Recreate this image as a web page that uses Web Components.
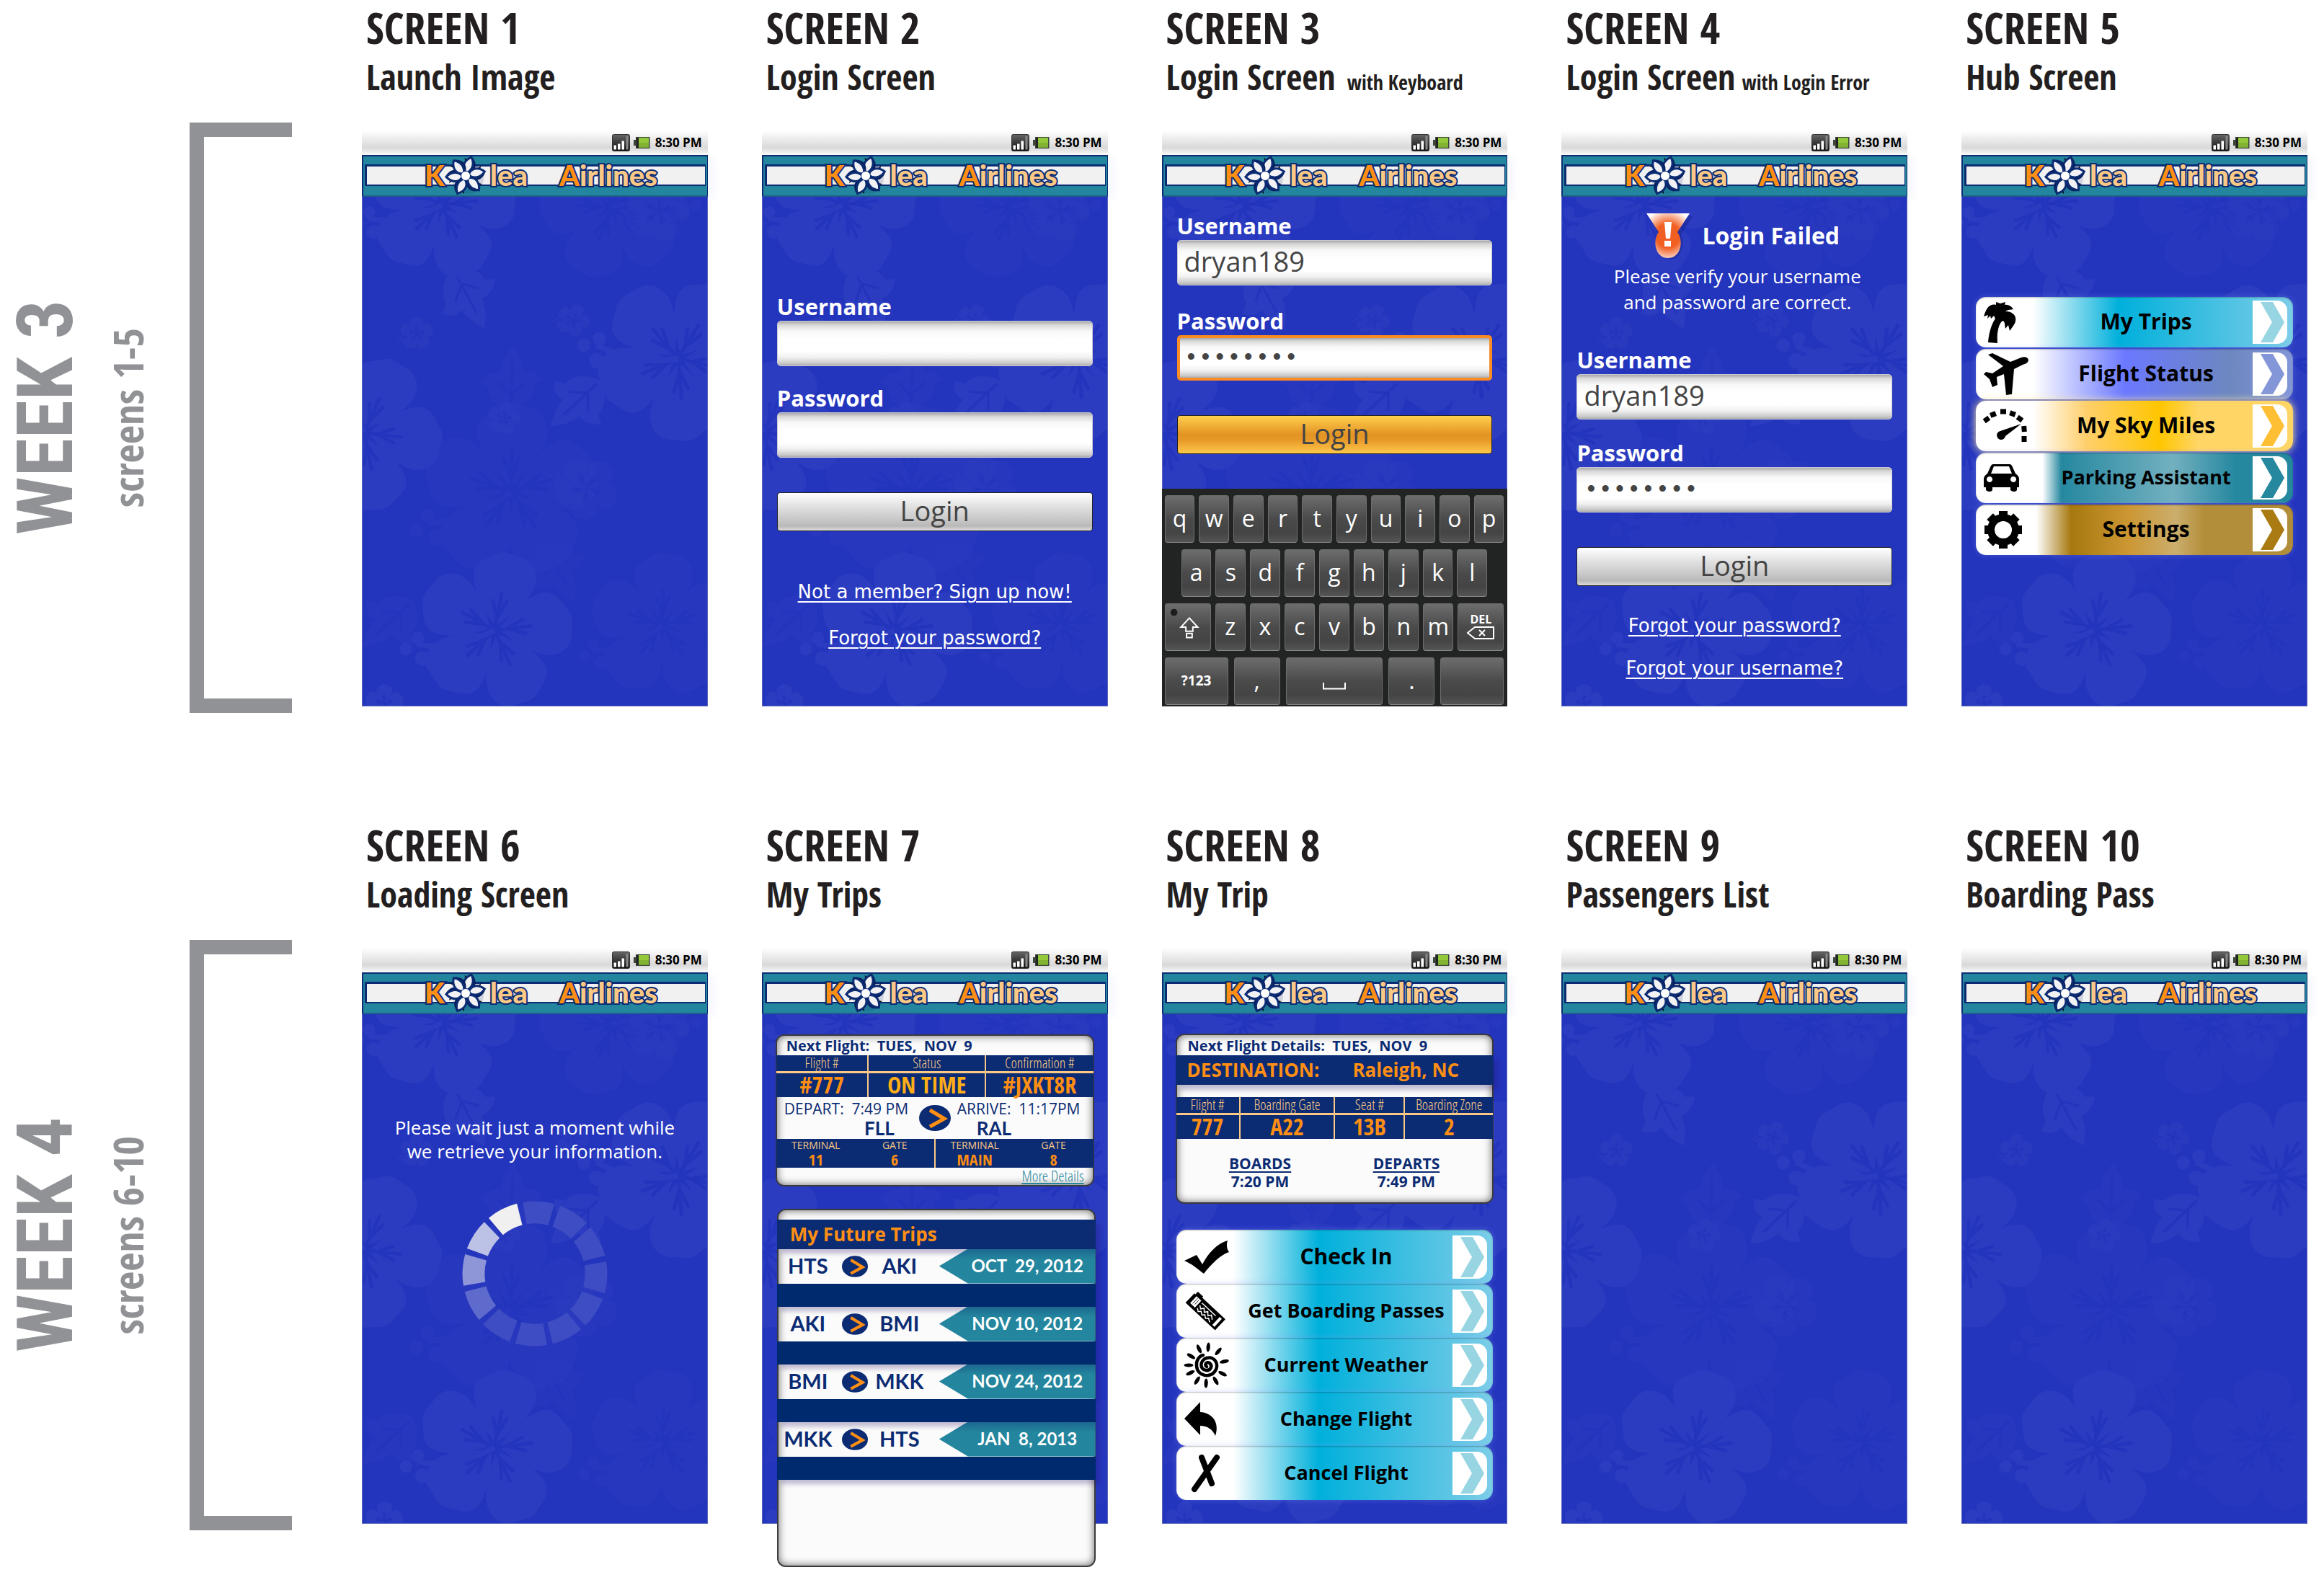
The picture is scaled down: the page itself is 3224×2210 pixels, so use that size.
<!DOCTYPE html>
<html lang="en">
<head>
<meta charset="utf-8">
<title>Kolea Airlines – app storyboard</title>
<style>
html{--cond:"Open Sans Condensed","Roboto Condensed","Liberation Sans Narrow","Liberation Sans",sans-serif;
--light:"Open Sans Condensed Light","Open Sans Condensed","Roboto Condensed","Liberation Sans Narrow",sans-serif;
--narrow:"Liberation Sans Narrow","Roboto Condensed","Open Sans Condensed",sans-serif;
--sans:"Open Sans","Noto Sans",sans-serif;--navy:#0b2b73;--teal:#24869e;--orange:#ff8f14;--peach:#fbc985}
body{margin:0;background:#fff;font-family:var(--sans);color:#231f20}
</style>
</head>
<body>
<story-week name="WEEK 3" range="screens 1-5">
  <app-screen name="SCREEN 1" about="Launch Image"></app-screen>
  <app-screen name="SCREEN 2" about="Login Screen">
    <login-form top="132" gap="24"><a href="#join">Not a member? Sign up now!</a><a href="#password">Forgot your password?</a></login-form>
  </app-screen>
  <app-screen name="SCREEN 3" about="Login Screen" note="with Keyboard" wide>
    <login-form top="20" gap="29" user="dryan189" secret="password" active></login-form>
    <soft-keyboard></soft-keyboard>
  </app-screen>
  <app-screen name="SCREEN 4" about="Login Screen" note="with Login Error">
    <login-alert></login-alert>
    <login-form top="42" gap="26" user="dryan189" secret="password" tight><a href="#password">Forgot your password?</a><a href="#username">Forgot your username?</a></login-form>
  </app-screen>
  <app-screen name="SCREEN 5" about="Hub Screen">
    <menu-list class="hub">
      <menu-row tone="sky" icon="palm">My Trips</menu-row>
      <menu-row tone="iris" icon="plane">Flight Status</menu-row>
      <menu-row tone="sun" icon="gauge">My Sky Miles</menu-row>
      <menu-row tone="sea" icon="car" long>Parking Assistant</menu-row>
      <menu-row tone="sand" icon="gear">Settings</menu-row>
    </menu-list>
  </app-screen>
</story-week>
<story-week name="WEEK 4" range="screens 6-10">
  <app-screen name="SCREEN 6" about="Loading Screen"><loading-note></loading-note></app-screen>
  <app-screen name="SCREEN 7" about="My Trips"><next-flight></next-flight><future-trips></future-trips></app-screen>
  <app-screen name="SCREEN 8" about="My Trip">
    <flight-details></flight-details>
    <menu-list class="trip">
      <menu-row tone="sky" icon="check" tall>Check In</menu-row>
      <menu-row tone="sky" icon="pass" tall long>Get Boarding Passes</menu-row>
      <menu-row tone="sky" icon="weather" tall long>Current Weather</menu-row>
      <menu-row tone="sky" icon="back" tall long>Change Flight</menu-row>
      <menu-row tone="sky" icon="cross" tall long>Cancel Flight</menu-row>
    </menu-list>
  </app-screen>
  <app-screen name="SCREEN 9" about="Passengers List"></app-screen>
  <app-screen name="SCREEN 10" about="Boarding Pass"></app-screen>
</story-week>

<script>
const part = (tag, css, html) => customElements.define(tag, class extends HTMLElement {
  connectedCallback() {
    if (this.shadowRoot) return;
    this.attachShadow({mode: 'open'}).innerHTML =
      `<style>:host{display:block}*{box-sizing:border-box}${css}</style>${html(this)}`;
  }
});
const attr = (el, n) => el.getAttribute(n) || '';

/* A week: turned label, bracket, five screens */
part('story-week', `
:host{display:grid;grid-template-columns:263px 142px minmax(0,1fr);padding:0 23px 0 0;height:1134px}
.label{margin-top:170px;height:819px;display:flex;align-items:center;justify-content:flex-start;gap:18px;color:#919296;font-family:var(--cond)}
.label>*{writing-mode:vertical-rl;transform:rotate(180deg);margin:0;text-align:center;white-space:nowrap;font-weight:700}
h1{font-family:var(--narrow);font-size:108px;line-height:126px}
p{font-size:57px;line-height:66px}
.bracket{margin-top:170px;height:819px;border:20px solid #919296;border-right:0}
.screens{margin-left:97px;display:grid;grid-template-columns:repeat(5,minmax(0,1fr));column-gap:75px;align-items:start}
`, e => `<div class="label"><h1>${attr(e,'name')}</h1><p>${attr(e,'range')}</p></div><div class="bracket"></div><div class="screens"><slot></slot></div>`);

/* One captioned phone screen */
part('app-screen', `
header{height:181px;padding:0 0 0 6px;font-family:var(--cond);font-weight:700;white-space:nowrap}
h2{margin:0;font-size:60px;line-height:76px;font-weight:700}
p{margin:0;font-size:48px;line-height:62px;font-weight:700}
small{font-size:28px;margin-left:9px}
:host([wide]) small{margin-left:16px}
.body{position:relative;z-index:0;height:707px;background:#2334bd;border:1px solid #5a67b8;border-top:0;display:flex;flex-direction:column}
flower-field{position:absolute;inset:0;z-index:-1}
`, e => `<header><h2>${attr(e,'name')}</h2><p>${attr(e,'about')}${attr(e,'note') ? `<small>${attr(e,'note')}</small>` : ''}</p></header>
<status-bar></status-bar><brand-bar></brand-bar><div class="body"><flower-field></flower-field><slot></slot></div>`);

part('status-bar', `
:host{display:flex;align-items:center;justify-content:flex-end;gap:5px;height:34px;padding-right:8px;background:linear-gradient(#fff,#ececec 35%,#d9d9d9 70%,#f4f4f4 95%,#fff)}
span{font:700 17px/34px var(--sans);color:#000;margin-left:2px;white-space:nowrap}
svg{display:block}
`, () => `<svg width="25" height="24" viewBox="0 0 25 24"><defs><linearGradient id="g" x2="0" y2="1"><stop stop-color="#666"/><stop offset="1" stop-color="#0c0c0c"/></linearGradient></defs><rect x=".5" y=".5" width="24" height="23" rx="2" fill="url(#g)" stroke="#333"/><path d="M2.500 15.500h3.500v6h-3.500zM8 13.500h3.500v8H8zM13.500 9.500H17v12h-3.500z" fill="#fff"/><path d="M19.500 3h3v18.500h-3z" fill="#888"/></svg>
<svg width="23" height="18" viewBox="0 0 23 18"><path d="M0 5h3V1h19.500v16H3v-4H0z" fill="#3c443c"/><path d="M4 2h3v14H4z" fill="#222"/><path d="M7 2h14v13.500H7z" fill="#92c83a"/><path d="M7 9h14v6.500H7z" fill="#83b332"/></svg><span>8:30 PM</span>`);

/* Airline banner */
part('brand-bar', `
:host{height:58px;background:var(--teal);border:2px solid var(--navy);border-right-width:1px;border-bottom-color:#1d5f88;padding:11px 2px 0;box-sizing:border-box;box-shadow:10px 4px 8px #eef0fb66}
.bar{display:flex;align-items:center;height:30px;padding-left:80px;background:#f1f1f2;border:3px solid var(--navy);border-width:3px 1px 2px 3px}
.bar>*{flex:none}
span{font:900 40px/28px Lato,var(--sans);padding-bottom:2px;color:var(--peach);-webkit-text-stroke:4px var(--navy);paint-order:stroke fill;white-space:nowrap}
b{color:var(--orange);font-weight:inherit}
svg{width:60px;height:60px;margin:0 4px 0 -1px;overflow:visible}
.air{margin-left:44px}
`, () => `<div class="bar"><span><b>K</b></span><svg viewBox="-30 -30 60 60"><defs><g id="p"><path d="M0-4C-11-11-10-21 1-28 11-20 9-10 0-4z" transform="translate(2 1)" fill="#071f5c"/><path d="M-8-24l6 3-3 3z" fill="#000"/><path d="M0-4C-9-10-8-20 1-27 8-19 7-10 0-4z" fill="#f2f2f4" stroke="#0b2b73" stroke-width="3"/></g></defs>
<circle cx="3" cy="3" r="22" fill="#0b2b73" opacity=".15"/>${[15,75,135,203,265,320].map(a => `<use href="#p" transform="rotate(${a})"/>`).join('')}<circle r="6.500" fill="#fff" stroke="#0b2b73"/></svg><span>lea</span><span class="air"><b>A</b>irlines</span></div>`);

/* Tone-on-tone hibiscus wallpaper */
part('flower-field', `svg{display:block;width:100%;height:100%}`, () => {
  const big = [[110,12,106,10,1],[346,15,104,200,.5],[438,225,118,30,1],[2,328,112,95,1],[206,410,126,0,.5],[311,404,46,40,.5],[183,602,112,10,1],[416,595,104,0,.5],[75,190,24,0,.8],[292,172,24,20,.8],[196,308,24,10,.8],[30,704,28,0,1],[410,20,46,10,.5]];
  const leaf = [[125,100,150,1],[330,255,225,1],[206,300,0,.5],[70,560,225,.5],[250,480,150,.4]];
  return `<svg viewBox="0 0 478 707" preserveAspectRatio="xMidYMid slice"><defs>
<g id="f">${[0,72,144,216,288].map(a => `<g transform="rotate(${a})"><path d="M0-6C-10-14-36-42-38-66C-38-82-24-86-13-94C-3-101 8-95 18-94C34-92 42-78 40-62C36-40 12-16 0-6z" fill="#2b3cc0"/><path d="M0-8L1-46M0-16L-8-36M1-18L9-38" stroke="#2334bd" stroke-width="4" stroke-linecap="round" fill="none"/></g>`).join('')}<path d="M0 0C-28 22-60 34-92 34" stroke="#2b3cc0" stroke-width="7" fill="none"/><circle cx="-92" cy="26" r="8" fill="#2b3cc0"/><circle cx="-104" cy="42" r="8" fill="#2b3cc0"/><circle cx="-82" cy="50" r="9" fill="#2b3cc0"/></g>
<g id="l"><path d="M0 0C-18-6-32-20-32-36L-44-42C-36-54-22-58-14-56C-14-70-6-84 4-94C10-82 18-70 18-56C28-60 38-56 44-46L32-38C32-20 18-6 0 0z" fill="#2b3cc0"/><path d="M0-6L2-70M0-24L-18-42M1-26L20-42" stroke="#2334bd" stroke-width="3" fill="none"/></g></defs>
${leaf.map(([x,y,r,o]) => `<use href="#l" opacity="${o}" transform="translate(${x} ${y}) rotate(${r})"/>`).join('')}
${big.map(([x,y,r,a,o]) => `<use href="#f" opacity="${o}" transform="translate(${x} ${y}) rotate(${a}) scale(${r/100})"/>`).join('')}</svg>`;
});

part('login-form', `
form{display:flex;flex-direction:column;padding:0 20px}
label{font:700 31px/40px var(--sans);color:#fff}
input{height:63px;border:1px solid #c9c9d4;border-radius:5px;padding:0 9px 5px;margin:0;min-width:0;font:38px/56px var(--sans);color:#444;outline:0;
background:linear-gradient(#a8a8a8,#d9d9d9 8%,#f8f8f8 22%,#fff 40%,#fff 68%,#f0f0f0 82%,#c9c9c9 95%,#ababab)}
input[type=password]{font:33px/60px "Liberation Mono",monospace;padding:2px 9px 0}
:host([active]) input[type=password]{border:4px solid #fb8b24;padding:2px 6px 0}
button{height:54px;margin:48px 0 0;padding:0 0 4px;border:1px solid #222;border-radius:4px;font:38px/46px var(--sans);color:#444;background:linear-gradient(#fff,#e2e2e2 35%,#c4c4c4 75%,#b8b8b8 88%,#ddd)}
:host([active]) button{background:linear-gradient(#ffcf4f,#e39323 50%,#e79a29 65%,#ffc94b)}
nav{display:flex;flex-direction:column;align-items:center;gap:32px;margin-top:68px}
:host([tight]) nav{margin-top:39px;gap:27px}
::slotted(a){font:26px/32px "DejaVu Sans",var(--sans);color:#fff;text-underline-offset:4px;text-decoration-thickness:2px;white-space:nowrap}
`, e => `<form style="margin-top:${attr(e,'top')}px"><label for="u">Username</label><input id="u" type="text" value="${attr(e,'user')}">
<label for="p" style="margin-top:${attr(e,'gap')}px">Password</label><input id="p" type="password" value="${attr(e,'secret')}">
<button type="button">Login</button>${e.children.length ? '<nav><slot></slot></nav>' : ''}</form>`);

part('login-alert', `
.head{display:flex;align-items:center;justify-content:center;gap:17px;margin:22px 0 0 24px;height:64px}
h3{margin:0;font:700 32px/40px var(--sans);color:#fff}
p{margin:6px 0 0;padding-left:8px;font:26px/36px var(--sans);color:#fff;text-align:center}
svg{overflow:visible}
`, () => `<div class="head"><svg width="60" height="62" viewBox="0 0 60 62"><defs><radialGradient id="m" cx=".5" cy=".5" r=".6"><stop offset=".45" stop-color="#f15f22"/><stop offset="1" stop-color="#fff"/></radialGradient></defs><path d="M4 4H64L48 30C52 36 52 62 33 64" fill="#0d1a7a" opacity=".35"/><path d="M0 0H60L43 26C52 38 48 62 30 62S8 38 17 26z" fill="url(#m)"/><path d="M25 12h10l-2 23h-6zM25 38h9v8h-9z" fill="#fff"/></svg><h3>Login Failed</h3></div><p>Please verify your username<br>and password are correct.</p>`);

part('soft-keyboard', `
:host{margin:auto -1px -1px}
.board{background:#222423;padding:9px 5px 2px 4px;display:flex;flex-direction:column;gap:9px}
.row{display:flex;gap:6px}
.row:nth-child(2){padding:0 23px}
button{flex:1 1 0;min-width:0;height:66px;padding:0 0 2px;border:1px solid #6e6e6e;border-bottom-color:#888;border-radius:4px;background:linear-gradient(#6d6d6d,#4a4a4a 50%,#444 80%,#555);color:#fff;font:32px/58px var(--sans);display:flex;flex-direction:column;align-items:center;justify-content:center}
.w2{flex:0 0 64px}.w3{flex:0 0 88px}.w2.c{margin:0 2px}
.s{font:700 19px/24px var(--sans)}.d{font:700 16px/18px var(--sans)}
.low{align-items:center;padding-top:16px}
`, () => {
  const keys = s => [...s].map(k => `<button type="button">${k}</button>`).join('');
  return `<div class="board"><div class="row">${keys('qwertyuiop')}</div><div class="row">${keys('asdfghjkl')}</div>
<div class="row"><button type="button" class="w2" aria-label="Shift"><svg width="62" height="64" viewBox="0 0 62 64"><circle cx="11" cy="12" r="5" fill="#1c1c1c"/><path d="M33 20L45 33H38V39H28V33H21zM29 42h8v6h-8z" fill="none" stroke="#fff" stroke-width="2"/></svg></button>${keys('zxcvbnm')}
<button type="button" class="w2 d">DEL<svg width="38" height="20" viewBox="0 0 38 20"><path d="M1 10L11 2H37V18H11zM17 6l8 8M25 6l-8 8" fill="none" stroke="#fff" stroke-width="2"/></svg></button></div>
<div class="row"><button type="button" class="w3 s">?123</button><button type="button" class="w2 c">,</button><button type="button" class="low" aria-label="Space"><svg width="32" height="10" viewBox="0 0 32 10"><path d="M1 0V8.500H31V0" fill="none" stroke="#fff" stroke-width="2"/></svg></button><button type="button" class="w2 c">.</button><button type="button" class="w3" aria-label="Enter"></button></div></div>`;
});

part('menu-list', `
nav{display:flex;flex-direction:column;margin:0 19px}
:host(.hub) nav{margin-top:139px;gap:2px}
:host(.trip) nav{margin-top:36px}
`, () => `<nav><slot></slot></nav>`);

const icons = {
  palm: [45,58,`<path d="M6 57L19 58C18 45 20 33 25 28C29 25 29 32 30 38L34 33 36 41 41 34C46 27 45 20 40 17C37 14 33 14 30 14 34 11 38 12 41 11 38 6 33 4 29 5L30 1 23 3 17 1 17 5C10 3 4 7 0 21L6 19 5 24 9 20 10 24 14 20 16 24C10 33 7 45 6 57z"/>`],
  plane: [62,58,`<path d="M6 2L12 0 37 12 52 6C57 4 62 6 62 10C61 14 57 15 54 16L42 22 39 57 31 58 28 29 18 33 19 44 12 47 8 36 0 29 3 26 12 28 27 18z"/>`],
  gauge: [62,48,`<g>${[[4,15,-35],[13,8,-20],[27,4,0],[40,7,20],[50,14,35],[56,28,85],[56,42,90]].map(([x,y,r]) => `<rect x="-4" y="-3.500" width="8" height="7" transform="translate(${x} ${y}) rotate(${r})"/>`).join('')}<path d="M23 31L52 21 30 38A6 6 0 1 1 23 31z"/></g>`],
  car: [50,40,`<path fill-rule="evenodd" d="M10 3Q11 1 13 1H36Q38 1 39 3L44 14Q49 17 49 22V33H46V37Q45 39 42 39T37 37V33H12V37Q11 39 8 39T3 37V33H0V22Q0 17 5 14zM14 4L10 14H39L35 4zM8 18a4 4 0 1 0 .1 0zM41 18a4 4 0 1 0 .1 0z"/>`],
  gear: [54,52,`<circle cx="27" cy="26" r="17" fill="none" stroke="#000" stroke-width="10"/>${[0,45,90,135].map(a => `<rect x="21" y="0" width="12" height="7" transform="rotate(${a} 27 26)"/><rect x="21" y="45" width="12" height="7" transform="rotate(${a} 27 26)"/>`).join('')}`],
  check: [62,46,`<path d="M0 28L17 20 25 33C33 18 45 4 60 0C58 6 59 12 62 16C50 20 38 32 27 46C19 40 10 32 0 28z"/>`],
  pass: [58,54,`<g transform="translate(16 0) rotate(43)"><path d="M2-2H12V0H56V21H0V3H2z"/><path d="M5 4h9v13H5z" fill="#fff"/><path d="M8 5v10M11 6v8" stroke="#000" stroke-width=".8"/><path d="M17 5h26v1.500H17z" fill="#fff"/><path d="M17 10l4 3 3-4 4 4 3-4 4 4 3-4 5 4M17 15l4 3 3-3 4 3 3-3 4 3 3-3 5 3" fill="none" stroke="#fff" stroke-width="1.500"/><path d="M48 3h4v15h-4z" fill="#fff"/></g>`],
  weather: [62,62,`<path d="M31 33C27 31 31 25 35 28C40 32 36 39 30 38C21 37 21 24 31 21C43 18 49 31 42 40C35 49 18 46 17 32C16 24 21 18 26 17" fill="none" stroke="#000" stroke-width="4.500" stroke-linecap="round"/>${[5,40,78,118,150,182,212,245,270,300,335].map(a => `<ellipse cx="31" cy="6" rx="2.600" ry="6.500" transform="rotate(${a} 31 31)"/>`).join('')}`],
  back: [46,48,`<path d="M0 23L22 0V14C40 15 49 30 43 47C39 38 32 33 22 33V46z"/>`],
  cross: [50,52,`<path d="M14 48L45 4M24 4L38 40" fill="none" stroke="#000" stroke-width="8" stroke-linejoin="round" stroke-linecap="round"/>`]
};
const tones = {
  sky: ['#fff 18%,#00b0db 45%,#7ccde8', '#97d5e2'],
  iris: ['#fff 18%,#6b78ff 47%,#6d87c0 80%,#8396d8', '#8396d8'],
  sun: ['#fff 18%,#ffcf6b 35%,#ffc600 58%,#ffd566 70%,#ffd566', '#ffbf35'],
  sea: ['#fff 21%,#25889f 27%,#73b0c0 62%,#25889f 82%', '#25889f'],
  sand: ['#fff 19%,#a6780f 30%,#cc9733 48%,#cbae6d 63%,#b38e3a 72%', '#a97b12']
};
part('menu-row', `
a{display:flex;align-items:center;height:70px;padding-right:8px;border-radius:14px;color:#000;text-decoration:none;font:700 30px/36px var(--sans);box-shadow:inset 0 1px 2px #0004,0 0 8px #8f9cff55}
:host([tall]) a{height:75px}
:host([long]) a{font-size:27px}
:host([tone=sun]) a{box-shadow:0 0 12px #ffe9a0}
.icon{flex:0 0 88px;display:flex;justify-content:flex-start;padding-left:11px}
.label{flex:1;text-align:center;white-space:nowrap;padding-bottom:2px}
.go{flex:0 0 48px;height:60px;border-radius:0 14px 14px 0;background:#fff}
svg{display:block;overflow:visible}
`, e => {
  const [w,h,d] = icons[attr(e,'icon')], [bg,c] = tones[attr(e,'tone')];
  return `<a href="#${attr(e,'icon')}" style="background:linear-gradient(90deg,${bg})"><span class="icon"><svg width="${w}" height="${h}" viewBox="0 0 ${w} ${h}">${d}</svg></span><span class="label"><slot></slot></span><span class="go"><svg width="48" height="60" viewBox="0 0 48 60"><path d="M11 2H28L44 30 28 58H11L27 30z" fill="${c}"/></svg></span></a>`;
});

part('loading-note', `
p{margin:141px 0 0;font:26px/33px var(--sans);color:#fff;text-align:center;white-space:nowrap}
svg{display:block;margin:52px auto 0}
`, () => {
  const fill = ['#3f4dc4','#3f4dc4','#3f4dc4','#3f4dc4','#3f4dc4','#3f4dc4','#3f4dc4','#5f6bcc','#8e96d8','#bcc1e6','#f0f0f0','#3f4dc4'];
  return `<p>Please wait just a moment while<br>we retrieve your information.</p><svg width="202" height="202" viewBox="-101 -101 202 202">${fill.map((c,i) => `<path d="M-22-98A101 101 0 0 1 22-98L15-68A70 70 0 0 0-15-68z" fill="${c}" transform="rotate(${i*30+33})"/>`).join('')}</svg>`;
});

/* White paper panel used behind flight data */
part('paper-card', `
:host{background:#fbfbfb;border:2px solid #3a3a3f;border-radius:12px;box-shadow:inset 0 0 12px #0009;margin:0 18px}
`, () => `<slot></slot>`);
const go = (w,h) => `<svg class="go" width="${w}" height="${h}" viewBox="0 0 44 36"><ellipse cx="22" cy="18" rx="22" ry="18" fill="#0b2b73"/><path d="M15 7L35 19 15 30" fill="none" stroke="#ff8f14" stroke-width="5"/></svg>`;
const tableCss = `
.info{width:calc(100% + 2px);margin:0 -1px;table-layout:fixed;border-collapse:collapse;background:var(--navy);font-family:var(--cond);text-align:center}
.info th{height:23px;padding:0;font-family:var(--light);font-weight:300;font-size:20px;line-height:22px;color:var(--peach);border-bottom:3px solid var(--peach);white-space:nowrap}
.info td{height:34px;padding:0;font-weight:700;font-size:32px;line-height:32px;color:var(--orange);white-space:nowrap}
.info :is(th,td)+*{border-left:2px solid var(--peach)}
h3{margin:0;padding:0 0 0 13px;font:700 20px/27px var(--sans);color:var(--navy);white-space:pre}
`;
part('next-flight', `${tableCss}
paper-card{margin-top:28px}
.time{color:#ffae17!important}
.route{display:grid;grid-template-columns:1fr 44px 1fr;align-items:center;height:58px;padding:0 10px;color:var(--navy);font:21px/28px var(--sans);white-space:pre}
.route>div:last-child{padding-left:9px}
.route strong{display:block;font:700 26px/26px Lato,var(--sans);text-align:right;padding-right:34px}
.route>div:last-child strong{text-align:left;padding-left:27px}
.gates{width:calc(100% + 2px);margin:0 -1px;table-layout:fixed;border-collapse:collapse;background:var(--navy);text-align:center}
.gates th{font:14px/17px var(--sans);color:var(--peach);padding:0}
.gates td{font:700 22px/23px var(--cond);color:var(--orange);padding:0}
.gates :nth-child(3){border-left:2px solid var(--peach)}
footer{height:24px;text-align:right;padding-right:12px;line-height:22px}
a{font:300 21px/22px var(--light);color:var(--teal)}
`, () => `<paper-card><h3>Next Flight:  TUES,  NOV  9</h3>
<table class="info"><colgroup><col style="width:29%"><col style="width:37%"><col style="width:34%"></colgroup><tr><th>Flight #</th><th>Status</th><th>Confirmation #</th></tr><tr><td>#777</td><td class="time">ON TIME</td><td>#JXKT8R</td></tr></table>
<div class="route"><div>DEPART:  7:49 PM<strong>FLL</strong></div>${go(44,36)}<div>ARRIVE:  11:17PM<strong>RAL</strong></div></div>
<table class="gates"><tr><th>TERMINAL</th><th>GATE</th><th>TERMINAL</th><th>GATE</th></tr><tr><td>11</td><td>6</td><td>MAIN</td><td>8</td></tr></table>
<footer><a href="#details">More Details</a></footer></paper-card>`);

part('future-trips', `
paper-card{margin:31px 16px 0 20px;height:497px}
h3{margin:13px -2px 0;padding-left:18px;background:var(--navy);font:700 26px/41px var(--sans);color:var(--orange);position:relative;box-shadow:6px 6px 6px #20106044}
ul{list-style:none;margin:0 -2px;padding:0}
li{border-bottom:32px solid #002a6e;height:80px;display:grid;grid-template-columns:86px 44px 80px 1fr;align-items:center;box-shadow:5px 6px 6px #20106044}
span{font:700 29px/46px Lato,var(--sans);padding-bottom:2px;color:var(--navy);text-align:center}
svg{justify-self:center}
time{align-self:stretch;margin-left:15px;padding-left:28px;background:linear-gradient(#0b2b7355,#0000 30%),var(--teal);clip-path:polygon(0 50%,40px 0,100% 0,100% 100%,40px 100%);font:700 24px/46px Lato,var(--sans);color:#fff;text-align:center;white-space:pre}
`, () => `<paper-card><h3>My Future Trips</h3><ul>${[['HTS','AKI','OCT  29, 2012'],['AKI','BMI','NOV 10, 2012'],['BMI','MKK','NOV 24, 2012'],['MKK','HTS','JAN  8, 2013']].map(([a,b,d]) => `<li><span>${a}</span>${go(36,30)}<span>${b}</span><time>${d}</time></li>`).join('')}</ul></paper-card>`);

part('flight-details', `${tableCss}
paper-card{margin-top:27px;height:236px}
h3{line-height:29px;padding-left:15px}
.to{display:flex;gap:46px;margin:-1px -2px 17px;padding-left:16px;background:var(--navy);font:700 26px/41px var(--sans);color:var(--orange);box-shadow:6px 7px 6px #20106044;white-space:nowrap}
dl{margin:22px 18px 0 14px;display:grid;grid-template-columns:1fr 1fr;text-align:center;font:700 21px/25px var(--sans);color:var(--navy)}
dt{grid-row:1;text-decoration:underline;text-underline-offset:3px}dd{margin:0}
`, () => `<paper-card><h3>Next Flight Details:  TUES,  NOV  9</h3><div class="to"><span>DESTINATION:</span><span>Raleigh, NC</span></div>
<table class="info"><colgroup><col style="width:20%"><col style="width:30%"><col style="width:22%"><col style="width:28%"></colgroup><tr><th>Flight #</th><th>Boarding Gate</th><th>Seat #</th><th>Boarding Zone</th></tr><tr><td>777</td><td>A22</td><td>13B</td><td>2</td></tr></table>
<dl><dt>BOARDS</dt><dt>DEPARTS</dt><dd>7:20 PM</dd><dd>7:49 PM</dd></dl></paper-card>`);
</script>
</body>
</html>
